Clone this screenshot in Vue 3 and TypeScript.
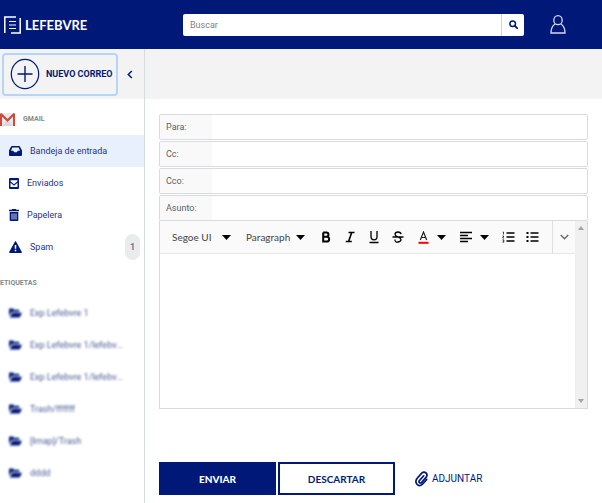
<script setup lang="ts">
import { ref } from 'vue'

interface Folder {
  id: string
  name: string
  icon: 'inbox' | 'sent' | 'trash' | 'spam'
  count?: number
}

interface Field {
  id: string
  label: string
  value: string
}

const folders: Folder[] = [
  { id: 'inbox', name: 'Bandeja de entrada', icon: 'inbox' },
  { id: 'sent', name: 'Enviados', icon: 'sent' },
  { id: 'trash', name: 'Papelera', icon: 'trash' },
  { id: 'spam', name: 'Spam', icon: 'spam', count: 1 },
]

const tags: string[] = [
  'Exp Lefebvre 1',
  'Exp Lefebvre 1/lefebv...',
  'Exp Lefebvre 1/lefebv...',
  'Trash/ffffff',
  '[Imap]/Trash',
  'dddd',
]

const fields = ref<Field[]>([
  { id: 'to', label: 'Para:', value: '' },
  { id: 'cc', label: 'Cc:', value: '' },
  { id: 'bcc', label: 'Cco:', value: '' },
  { id: 'subject', label: 'Asunto:', value: '' },
])

const activeFolder = ref('inbox')
const search = ref('')
const body = ref('')
</script>

<template>
  <div class="app">
    <header class="header">
      <a class="logo" href="#" aria-label="Lefebvre">
        <svg width="17" height="18" viewBox="0 0 17 18" fill="none" stroke="#fff">
          <path d="M.8 17V.9H12" stroke-width="1.5" />
          <path d="M16.2 2v15.1H7" stroke-width="1.5" />
          <path d="M5 5.5h7M5 9h7M5 12.5h7" stroke-width="1.2" />
        </svg>
        <span>LEFEBVRE</span>
      </a>
      <form class="search" role="search" @submit.prevent>
        <input v-model="search" type="search" placeholder="Buscar" aria-label="Buscar" />
        <button type="submit" aria-label="Buscar">
          <svg width="9" height="9" viewBox="0 0 9 9" fill="none" stroke="#001978">
            <circle cx="3.7" cy="3.7" r="2.8" stroke-width="1.5" />
            <path d="M5.8 5.8 8.3 8.3" stroke-width="1.8" stroke-linecap="round" />
          </svg>
        </button>
      </form>
      <button class="user" type="button" aria-label="Usuario">
        <svg width="16" height="19" viewBox="0 0 16 19" fill="none" stroke="#d5daee" stroke-width="1.3">
          <ellipse cx="8" cy="5.2" rx="4.2" ry="4.5" />
          <path d="M5.2 9C2.5 10.500 1 13.500 1 18h14c0-4.500-1.500-7.500-4.200-9" />
        </svg>
      </button>
    </header>

    <div class="columns">
      <aside class="sidebar">
        <div class="sidebar-top">
          <button class="new-mail" type="button">
            <svg width="30" height="32" viewBox="0 0 30 32" fill="none" stroke="#001978">
              <ellipse cx="15" cy="16" rx="13.700" ry="14.700" stroke-width="1.200" />
              <path d="M15 8v16M7.500 16h15" stroke-width="1.400" />
            </svg>
            <span>NUEVO CORREO</span>
          </button>
          <button class="collapse" type="button" aria-label="Contraer">
            <svg width="6" height="9" viewBox="0 0 6 9" fill="none" stroke="#001978" stroke-width="1.500">
              <path d="M4.800 1 1.300 4.500l3.500 3.500" />
            </svg>
          </button>
        </div>

        <h2 class="account">
          <svg width="15" height="13" viewBox="0 0 15 13">
            <path d="M1 0h13v13H1z" fill="#e9e9e9" />
            <path d="M2 13 7.500 7.500 13 13z" fill="#d9d9d9" />
            <path d="M1 .5v12.500M14 .5v12.500" stroke="#d5453a" stroke-width="2" />
            <path d="m1 1 6.500 6.500L14 1" fill="none" stroke="#d5453a" stroke-width="2.200" />
          </svg>
          GMAIL
        </h2>
        <nav aria-label="Carpetas">
          <a
            v-for="folder in folders"
            :key="folder.id"
            href="#"
            class="row"
            :class="{ active: folder.id === activeFolder }"
            @click.prevent="activeFolder = folder.id"
          >
            <svg v-if="folder.icon === 'inbox'" width="13" height="10" viewBox="0 0 13 10" fill="#001978">
              <path fill-rule="evenodd" d="M3 0h7q.6 0 .9.500L13 4.500V9q0 1-1 1H1Q0 10 0 9V4.500L2.100.500Q2.400 0 3 0zM3.300 1.600 2 4.700h2.200l1 1.600h2.600l1-1.600H11L9.700 1.600z" />
            </svg>
            <svg v-else-if="folder.icon === 'sent'" width="10" height="11" viewBox="0 0 10 11">
              <rect width="10" height="11" rx="1" fill="#001978" />
              <path d="M1.500 2.200h7v1L5 6.200 1.500 3.200z" fill="#fff" />
              <path d="M1.500 4.700 5 7.700l3.500-3V9h-7z" fill="#fff" />
            </svg>
            <svg v-else-if="folder.icon === 'trash'" width="10" height="12" viewBox="0 0 10 12">
              <path d="M3.200 0h3.600l.5.800H10v1.400H0V.800h2.700zM.7 3h8.600v8q0 1-1 1H1.700q-1 0-1-1z" fill="#001978" />
              <path d="M3 4.500v6M5 4.500v6M7 4.500v6" stroke="#fff" stroke-width=".8" />
            </svg>
            <svg v-else width="13" height="12" viewBox="0 0 13 12">
              <path d="M6.500.8 12.300 11.300H.7z" fill="#001978" stroke="#001978" stroke-width="1.200" stroke-linejoin="round" />
              <path d="M6.500 4v3.700M6.500 8.700v1.600" stroke="#fff" stroke-width="1.500" />
            </svg>
            <span class="row-name">{{ folder.name }}</span>
            <span v-if="folder.count" class="badge">{{ folder.count }}</span>
          </a>
        </nav>

        <h2 class="tags-title">ETIQUETAS</h2>
        <nav class="tags" aria-label="Etiquetas">
          <a v-for="(tag, index) in tags" :key="index" href="#" class="row" @click.prevent>
            <svg width="13" height="10" viewBox="0 0 13 10" fill="#001978">
              <path d="M0 8V1.500Q0 .5 1 .5h3l1.300 1.300h4q1 0 1 1v1H3.500q-.8 0-1.200.700z" />
              <path d="M3.300 4.700H13L11 8.800q-.3.700-1 .7H.8z" />
            </svg>
            <span class="row-name">{{ tag }}</span>
          </a>
        </nav>
      </aside>

      <main class="main">
        <div class="main-top"></div>
        <form class="compose" @submit.prevent>
          <div class="fields">
            <div v-for="field in fields" :key="field.id" class="field">
              <label :for="field.id">{{ field.label }}</label>
              <input :id="field.id" v-model="field.value" type="text" />
            </div>
          </div>

          <div class="editor">
            <div class="editor-content">
              <div class="toolbar" role="toolbar" aria-label="Formato">
                <div class="tools">
                  <div class="picker">
                    <select aria-label="Fuente"><option>Segoe UI</option></select>
                    <svg class="caret" width="9" height="5" viewBox="0 0 9 5"><path d="M0 0h9L4.500 5z" /></svg>
                  </div>
                  <div class="picker">
                    <select aria-label="Estilo"><option>Paragraph</option></select>
                    <svg class="caret" width="9" height="5" viewBox="0 0 9 5"><path d="M0 0h9L4.500 5z" /></svg>
                  </div>
                  <div class="buttons">
                    <button type="button" class="tool" aria-label="Negrita">
                      <svg width="10" height="12" viewBox="0 0 10 12" fill="none" stroke="#000" stroke-width="2">
                        <path d="M2.200 1.500V10.500H5.800a2.300 2.300 0 0 0 0-4.700H2.200M2.200 5.800H5.300a2.100 2.100 0 0 0 0-4.300H2.200" />
                      </svg>
                    </button>
                    <button type="button" class="tool" aria-label="Cursiva">
                      <svg width="10" height="12" viewBox="0 0 10 12" fill="none" stroke="#000" stroke-width="1.600">
                        <path d="M3.500 1.500h6M.8 10.500h6M6.700 1.500 3.600 10.500" />
                      </svg>
                    </button>
                    <button type="button" class="tool" aria-label="Subrayado">
                      <svg width="10" height="14" viewBox="0 0 10 14" fill="none" stroke="#000" stroke-width="1.300">
                        <path d="M2 1v5.800q0 3 3 3t3-3V1M.5 12.500h9" />
                      </svg>
                    </button>
                    <button type="button" class="tool" aria-label="Tachado">
                      <svg width="12" height="12" viewBox="0 0 12 12" fill="none" stroke="#000" stroke-width="1.300">
                        <path d="M.5 6h11M9 3.200Q8.700 1 6 1T3 3.300Q3 5 5.500 5.700M6.700 6.300Q9 7 9 8.700T6 11 2.900 8.500" />
                      </svg>
                    </button>
                    <button type="button" class="tool split" aria-label="Color del texto">
                      <svg width="13" height="13" viewBox="0 0 13 13" fill="none">
                        <path d="M3.300 9 6.500 1 9.700 9M4.500 6.500h4" stroke="#222" stroke-width="1.200" />
                        <path d="M1.500 11.800h10" stroke="#f00" stroke-width="2" />
                      </svg>
                      <svg class="caret" width="9" height="5" viewBox="0 0 9 5"><path d="M0 0h9L4.500 5z" /></svg>
                    </button>
                    <button type="button" class="tool split" aria-label="Alineación">
                      <svg width="13" height="12" viewBox="0 0 13 12" stroke="#000" stroke-width="1.600">
                        <path d="M0 1.500h12M0 4.500h8M0 7.500h12M0 10.500h8" />
                      </svg>
                      <svg class="caret" width="9" height="5" viewBox="0 0 9 5"><path d="M0 0h9L4.500 5z" /></svg>
                    </button>
                    <button type="button" class="tool" aria-label="Lista numerada">
                      <svg width="13" height="12" viewBox="0 0 13 12" fill="none" stroke="#000">
                        <path d="M4.500 2h8M4.500 6h8M4.500 10h8" stroke-width="1.400" />
                        <path d="M.7 1h.8v2.500M.5 5h1.300L.6 7h1.400M.5 8.800h1.300v2.400H.5M.8 10h1" stroke-width=".7" />
                      </svg>
                    </button>
                    <button type="button" class="tool" aria-label="Lista">
                      <svg width="13" height="12" viewBox="0 0 13 12" stroke="#000">
                        <path d="M4.500 2h8M4.500 6h8M4.500 10h8" stroke-width="1.400" />
                        <path d="M.5 2h2M.5 6h2M.5 10h2" stroke-width="2" />
                      </svg>
                    </button>
                  </div>
                </div>
                <button type="button" class="more" aria-label="Más opciones">
                  <svg width="9" height="6" viewBox="0 0 9 6" fill="none" stroke="#666" stroke-width="1.400">
                    <path d="m.8 1 3.700 3.700L8.200 1" />
                  </svg>
                </button>
              </div>
              <textarea v-model="body" aria-label="Mensaje"></textarea>
            </div>
            <div class="scrollbar" aria-hidden="true">
              <svg width="6" height="4" viewBox="0 0 6 4" fill="#a3a3a3"><path d="M0 4h6L3 0z" /></svg>
              <svg width="6" height="4" viewBox="0 0 6 4" fill="#a3a3a3"><path d="M0 0h6L3 4z" /></svg>
            </div>
          </div>

          <div class="actions">
            <button type="submit" class="action primary">ENVIAR</button>
            <button type="button" class="action">DESCARTAR</button>
            <button type="button" class="attach">
              <svg width="13" height="16" viewBox="0 0 13 16" fill="none" stroke="#001978" stroke-width="1.700" stroke-linecap="round">
                <path d="M8.700 4.800 4.300 9.700Q3.500 11 4.500 11.700T6.700 11.300L11 6.400Q13 3.800 11 2T6.700 2.200L2 7.500Q-.2 10.500 2 13.300T7.500 13.200L11.700 8.500" />
              </svg>
              <span>ADJUNTAR</span>
            </button>
          </div>
        </form>
      </main>
    </div>
  </div>
</template>

<style>
body {
  margin: 0;
  background: #fff;
}
</style>

<style scoped>
.app {
  display: flex;
  flex-direction: column;
  min-height: 100vh;
  font-family: Roboto, 'Liberation Sans', sans-serif;
  font-size: 9px;
  line-height: 12px;
  color: #001978;
}

.app *,
.app *::before {
  box-sizing: border-box;
}

button,
input,
select,
textarea {
  margin: 0;
  padding: 0;
  border: 0;
  border-radius: 0;
  outline: 0;
  background: none;
  color: inherit;
  font: inherit;
  appearance: none;
}

button {
  display: flex;
  align-items: center;
  justify-content: center;
  cursor: pointer;
}

a {
  color: inherit;
  text-decoration: none;
}

svg {
  display: block;
  flex: none;
}

h2 {
  margin: 0;
  font-size: 7px;
  font-weight: 700;
  color: #7f8a8a;
}

.header {
  display: grid;
  grid-template-columns: 183px 1fr 78px;
  align-items: center;
  height: 49px;
  background: #001978;
}

.logo {
  display: flex;
  align-items: center;
  gap: 4px;
  padding-left: 4px;
  color: #fff;
  font-family: Lato, sans-serif;
  font-size: 13px;
  font-weight: 700;
  line-height: 18px;
}

.search {
  display: flex;
  height: 22px;
  border-radius: 2px;
  background: #fff;
}

.search input {
  flex: 1;
  min-width: 0;
  padding: 0 7px;
  color: #495057;
}

.search input::placeholder {
  color: #7b8086;
  opacity: 1;
}

.search button {
  width: 23px;
  border-left: 1px solid #ced4da;
}

.user {
  justify-self: start;
  margin-left: 26px;
}

.columns {
  display: flex;
  flex: 1;
}

.sidebar {
  flex: none;
  width: 145px;
  border-right: 1px solid #d5dddf;
}

.sidebar-top {
  display: flex;
  align-items: center;
  gap: 9px;
  height: 50px;
  padding-left: 2px;
  background: #f3f3f3;
}

.new-mail {
  justify-content: flex-start;
  gap: 6px;
  width: 116px;
  height: 43px;
  padding-left: 6px;
  border: 2px solid #b5d5f8;
  border-radius: 4px;
  font-weight: 700;
  white-space: nowrap;
}

.account {
  display: flex;
  align-items: center;
  gap: 8px;
  height: 36px;
  padding-top: 4px;
}

.row {
  display: flex;
  align-items: center;
  gap: 8px;
  height: 32px;
  padding: 0 4px 0 9px;
}

.row.active {
  background: #e8effd;
}

.row-name {
  flex: 1;
  color: #1f3484;
  white-space: nowrap;
}

.badge {
  padding: 7px 0;
  width: 15px;
  border-radius: 8px;
  background: #e9ecef;
  color: #777;
  font-size: 9px;
  font-weight: 700;
  text-align: center;
}

.tags-title {
  padding: 14px 0 8px;
}

.tags .row svg,
.tags .row-name {
  filter: blur(1px);
}

.tags .row-name {
  color: #4a5a96;
}

.main {
  flex: 1;
  min-width: 0;
}

.main-top {
  height: 50px;
  background: #f3f3f3;
}

.compose {
  padding: 15px 14px 8px;
}

.fields {
  display: grid;
  gap: 1px;
}

.field {
  display: flex;
  height: 26px;
  border: 1px solid #d8dce2;
  border-radius: 2px;
  overflow: hidden;
}

.field label {
  display: flex;
  align-items: center;
  width: 52px;
  padding-left: 6px;
  background: #f9f9f9;
  color: #5c6167;
}

.field input {
  flex: 1;
  min-width: 0;
  padding: 0 6px;
}

.editor {
  display: flex;
  height: 188px;
  border: 1px solid #dadada;
  border-top: 0;
}

.editor-content {
  display: flex;
  flex: 1;
  flex-direction: column;
  min-width: 0;
}

.toolbar {
  display: flex;
  height: 33px;
  border-bottom: 1px solid #e6e6e6;
  background: #fafafa;
  color: #444;
}

.tools {
  display: flex;
  flex: 1;
  align-items: center;
  gap: 15px;
  min-width: 0;
  padding-left: 12px;
  overflow: hidden;
}

.picker {
  display: grid;
  flex: none;
  grid-template-columns: 1fr 9px;
  align-items: center;
  width: 59px;
  font-family: Lato, sans-serif;
  font-size: 10px;
}

.picker select {
  grid-area: 1 / 1 / 2 / 3;
  width: 100%;
}

.picker .caret {
  grid-area: 1 / 2;
  pointer-events: none;
}

.buttons {
  display: flex;
  margin-left: -6px;
}

.tool {
  flex: none;
  width: 24px;
  height: 24px;
}

.tool.split {
  gap: 7px;
  width: 43px;
}

.more {
  width: 23px;
  border-left: 1px solid #e0e0e0;
}

textarea {
  flex: 1;
  width: 100%;
  padding: 8px 12px;
  color: #333;
  resize: none;
}

.scrollbar {
  display: flex;
  flex-direction: column;
  align-items: center;
  justify-content: space-between;
  width: 12px;
  padding: 5px 0;
  background: #f0f0f0;
}

.actions {
  display: flex;
  align-items: center;
  gap: 2px;
  margin-top: 53px;
}

.action {
  width: 117px;
  height: 33px;
  border: 2px solid #001978;
  font-family: Lato, sans-serif;
  font-size: 10px;
  font-weight: 700;
}

.action.primary {
  background: #001978;
  color: #fff;
  font-weight: 900;
}

.attach {
  gap: 4px;
  margin-left: 18px;
  font-size: 10px;
}
</style>
